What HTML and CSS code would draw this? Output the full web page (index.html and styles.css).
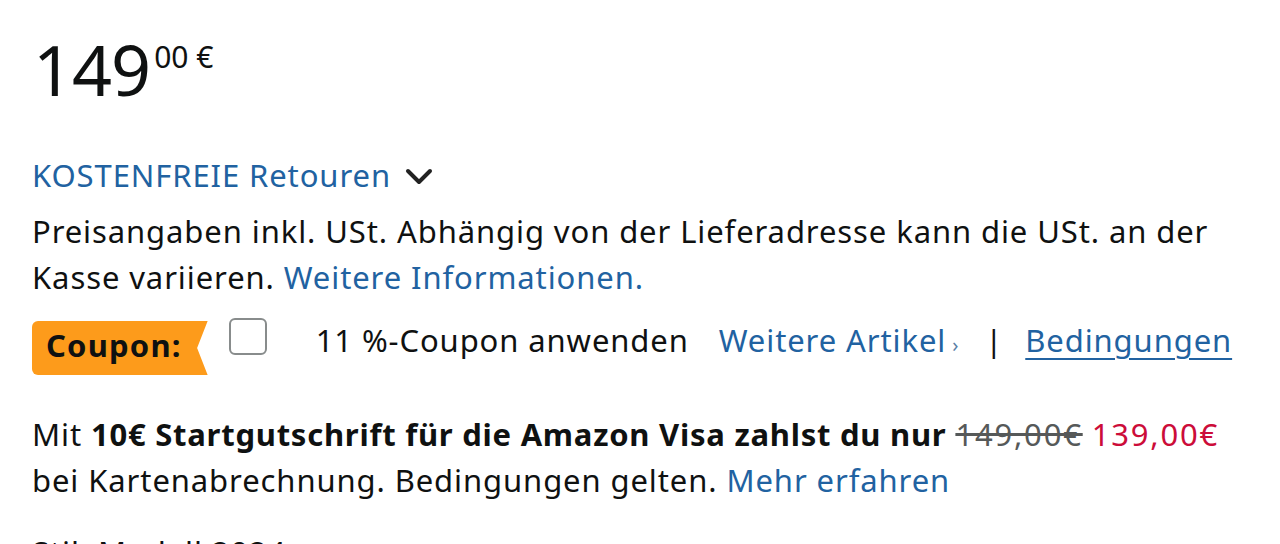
FILE: index.html
```html
<!DOCTYPE html>
<html lang="de">
<head>
  <meta charset="UTF-8" />
  <meta name="viewport" content="width=device-width, initial-scale=1.0" />
  <title>Preis und Angebote</title>
  <link rel="stylesheet" href="styles.css">
</head>
<body>
  <div class="buybox">
    <div class="price">
      <span class="price-whole">149</span><span class="price-sup">00&nbsp;€</span>
    </div>

    <div class="returns">
      <a href="#" class="link">KOSTENFREIE Retouren</a>
      <svg class="chevron" width="30" height="20" viewBox="0 0 30 20">
        <polyline points="3,4 14,15 25,4" fill="none" stroke="#222" stroke-width="4" stroke-linecap="round" stroke-linejoin="round"/>
      </svg>
    </div>

    <p class="tax-note">
      Preisangaben inkl. USt. Abhängig von der Lieferadresse kann die USt. an der
      Kasse variieren. <a href="#" class="link">Weitere Informationen.</a>
    </p>

    <div class="coupon-row">
      <span class="coupon-badge">Coupon:</span>
      <span class="coupon-check"></span>
      <div class="coupon-text">
        <span class="coupon-label">11 %-Coupon anwenden</span>
        <a href="#" class="link more-items">Weitere Artikel<span class="arrow">›</span></a>
        <span class="divider">|</span>
        <a href="#" class="link terms">Bedingungen</a>
      </div>
    </div>

    <p class="visa-offer">
      Mit <b>10€ Startgutschrift für die Amazon Visa zahlst du nur</b>
      <s class="old-price">149,00€</s> <span class="new-price">139,00€</span>
      bei Kartenabrechnung. Bedingungen gelten. <a href="#" class="link">Mehr erfahren</a>
    </p>

    <p class="next-line">Stil: Modell 2024</p>
  </div>
</body>
</html>
```

FILE: styles.css
```css
/* Buybox: price, returns, coupon and card offer */
body {
  margin: 0;
  background: #fff;
  color: #0f1111;
  font-family: "Noto Sans", "Open Sans", sans-serif;
  overflow: hidden;
}
.buybox {
  padding: 34px 0 0 32px;
  font-size: 31px;
  line-height: 46px;
  letter-spacing: 0.9px;
}
.buybox b { letter-spacing: 0.75px; }
.link { color: #2162a1; text-decoration: none; }

.price { line-height: 70px; height: 70px; letter-spacing: 0; }
.price-whole { font-size: 70px; margin-left: 1px; letter-spacing: -1px; }
.price-sup {
  font-size: 30px;
  vertical-align: top;
  line-height: 30px;
  margin-left: 4px;
  position: relative;
  top: 8px;
}

.returns {
  margin-top: 48px;
  display: flex;
  align-items: center;
  gap: 14px;
}
.chevron { margin-top: 4px; }

.tax-note { margin: 10px 0 0; width: 1240px; }

.coupon-row {
  margin-top: 21px;
  display: flex;
  align-items: flex-start;
  height: 54px;
}
.coupon-badge {
  background: #fd9b1b;
  font-weight: bold;
  font-size: 31px;
  letter-spacing: 1.2px;
  height: 54px;
  line-height: 44px;
  padding: 2px 26px 0 14px;
  box-sizing: border-box;
  border-radius: 6px 0 0 6px;
  clip-path: polygon(0 0, 100% 0, 94% 50%, 100% 100%, 0 100%);
}
.coupon-check {
  width: 34px;
  height: 33px;
  margin: -3px 0 0 21px;
  border: 2px solid #888c8c;
  border-radius: 6px;
}
.coupon-text { display: flex; margin-top: -4px; }
.coupon-label { margin-left: 49px; }
.more-items { margin-left: 30px; }
.arrow { font-size: 20px; color: #5a7fa6; margin-left: 6px; }
.divider { margin-left: 26px; }
.terms {
  margin-left: 22px;
  text-decoration: underline;
  text-underline-offset: 6px;
  text-decoration-thickness: 2px;
}

.visa-offer { margin: 36px 0 0; width: 1236px; }
.old-price, .new-price { letter-spacing: 1.8px; }
.old-price { color: #565959; }
.new-price { color: #cc0c39; }

.next-line { margin: 26px 0 0; }
```
